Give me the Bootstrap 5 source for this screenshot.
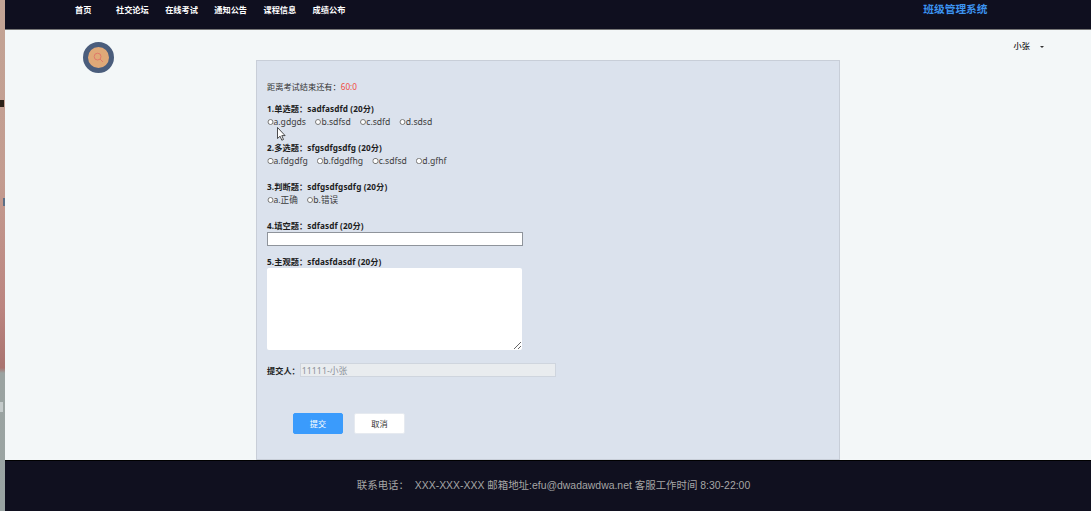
<!DOCTYPE html>
<html lang="zh">
<head>
<meta charset="utf-8">
<title>班级管理系统</title>
<link rel="stylesheet" href="https://cdn.jsdelivr.net/npm/bootstrap@5.3.0/dist/css/bootstrap.min.css">
<style>
html,body{height:511px;overflow:hidden}
body{font-family:"Noto Sans","Noto Sans CJK SC",sans-serif;font-size:8.2px;line-height:13px;color:#333;background:#f3f7f8}
.desk-strip{width:5px;flex:none;background:linear-gradient(#2b2118,#2b2118) 0 100px/4px 7px no-repeat,linear-gradient(#5b6f86,#5b6f86) 3px 198px/2px 8px no-repeat,linear-gradient(#c4cbcb,#c4cbcb) 0 402px/3px 10px no-repeat,linear-gradient(180deg,#c2a495 0,#c39c90 35%,#bb8580 60%,#a97470 72%,#9aa3a1 73%,#9aa4a3 100%)}
.top-bar{height:30px;background:#0f0f1f;border-bottom:1px solid #777;padding-left:70px;padding-right:103.5px}
.top-link{font-family:"Noto Sans CJK SC",sans-serif;font-size:8.2px;font-weight:700;line-height:18px;color:#fff;text-decoration:none;margin-right:16.4px}
.top-link.first-link{margin-right:24.6px}
.brand-name{font-family:"Noto Sans CJK SC",sans-serif;font-size:10.7px;font-weight:700;line-height:18px;color:#3c93f0}
.middle-area{height:430px;padding-left:78px;padding-right:47px}
.avatar-ring{width:31px;height:31px;margin-top:12px;border:5px solid #4a5d7c;border-radius:50%;background:#e0a978;flex:none}
.user-name{margin-top:9px;font-size:8.2px;font-family:"Noto Sans CJK SC",sans-serif;color:#222;font-weight:500}
.user-caret{display:inline-block;margin-left:10px;vertical-align:middle;border:2px solid transparent;border-top-color:#333;border-bottom:0}
.exam-card{width:584px;height:400px;margin:30px 0 0 142px;padding:19px 10px 0;background:#dbe2ed;border:1px solid #c8ced8;border-radius:0;flex:none}
.time-left{color:#f04a40}
.q-block{margin-top:9px}
.q-block+.q-block{margin-top:13px}
.q-block.q-tight{margin-top:9px}
.q-title{font-weight:700;color:#1d1d1d;margin:0;letter-spacing:.1px}
.q-opts{display:flex;color:#3c3c3c;font-size:8.6px;height:13px;padding-top:2px}
.q-opts label{display:flex;align-items:center;margin-right:9px}
.q-opts input{width:6.5px;height:6.5px;margin:0 0 1px 0}
.blank-input{display:block;width:256px;height:14px;background:#fff;border:1px solid #8f949b;border-radius:0;padding:0}
.essay-input{display:block;width:255px;height:82px;background:#fff;border:0;border-radius:2px}
.submitter-row{margin-top:13px;height:14px}
.submitter-row span{font-weight:700;color:#222}
.submitter-input{width:256px;height:14px;padding:0 1px;font-size:8.8px;line-height:12px;min-height:0;border:1px solid #cfd5de;background:#e3e8f0;color:#8d939c;border-radius:0}
.act-row{margin:36px 0 0 26px;gap:11px}
.act-btn{width:50px;height:21px;padding:0;font-size:8.2px;line-height:19px;border-radius:2px}
.act-ok{background:#3a9bfc;border-color:#3a9bfc;color:#fff}
.act-no{width:51px;background:#fff;border-color:#e6eaf0;color:#333}
.foot-bar{height:51px;background:#10101f;border-top:1px solid #000;color:#a6a6a6;font-size:10.45px;line-height:50px;font-family:"Liberation Sans","Noto Sans CJK SC",sans-serif;padding-left:11px}
.mouse-arrow{position:absolute;left:277px;top:127px;width:9px;height:14px}
</style>
</head>
<body>
<div class="d-flex" style="height:511px">
  <div class="desk-strip"></div>
  <div class="flex-grow-1 d-flex flex-column">
    <header class="top-bar d-flex justify-content-between align-items-start">
      <nav class="d-flex">
        <a class="top-link first-link" href="#">首页</a>
        <a class="top-link" href="#">社交论坛</a>
        <a class="top-link" href="#">在线考试</a>
        <a class="top-link" href="#">通知公告</a>
        <a class="top-link" href="#">课程信息</a>
        <a class="top-link" href="#">成绩公布</a>
      </nav>
      <div class="brand-name">班级管理系统</div>
    </header>
    <div class="middle-area d-flex align-items-start">
      <div class="avatar-ring d-flex align-items-center justify-content-center">
        <svg width="11" height="11" viewBox="0 0 11 11" fill="none" stroke="#e0796a" stroke-width="1"><circle cx="4.6" cy="4.6" r="3.4"/><path d="M7 7l3 3"/></svg>
      </div>
      <form class="card exam-card d-block">
        <div>距离考试结束还有：<span class="time-left">60:0</span></div>
        <div class="q-block">
          <p class="q-title">1.单选题：sadfasdfd (20分)</p>
          <div class="q-opts">
            <label><input type="radio" name="q1">a.gdgds</label>
            <label><input type="radio" name="q1">b.sdfsd</label>
            <label><input type="radio" name="q1">c.sdfd</label>
            <label><input type="radio" name="q1">d.sdsd</label>
          </div>
        </div>
        <div class="q-block">
          <p class="q-title">2.多选题：sfgsdfgsdfg (20分)</p>
          <div class="q-opts">
            <label><input type="checkbox">a.fdgdfg</label>
            <label><input type="checkbox">b.fdgdfhg</label>
            <label><input type="checkbox">c.sdfsd</label>
            <label><input type="checkbox">d.gfhf</label>
          </div>
        </div>
        <div class="q-block">
          <p class="q-title">3.判断题：sdfgsdfgsdfg (20分)</p>
          <div class="q-opts">
            <label><input type="radio" name="q3">a.正确</label>
            <label><input type="radio" name="q3">b.错误</label>
          </div>
        </div>
        <div class="q-block">
          <p class="q-title">4.填空题：sdfasdf (20分)</p>
          <input class="blank-input" type="text">
        </div>
        <div class="q-block q-tight">
          <p class="q-title">5.主观题：sfdasfdasdf (20分)</p>
          <textarea class="essay-input"></textarea>
        </div>
        <div class="submitter-row d-flex align-items-center">
          <span>提交人：</span>
          <input class="form-control submitter-input" type="text" value="11111-小张" disabled>
        </div>
        <div class="act-row d-flex">
          <button type="button" class="btn act-btn act-ok">提交</button>
          <button type="button" class="btn act-btn act-no">取消</button>
        </div>
      </form>
      <div class="user-name ms-auto">小张<span class="user-caret"></span></div>
    </div>
    <footer class="foot-bar text-center">联系电话： &nbsp;XXX-XXX-XXX 邮箱地址:efu@dwadawdwa.net 客服工作时间 8:30-22:00</footer>
  </div>
</div>
<svg class="mouse-arrow" viewBox="0 0 9 14"><path d="M.5.5v11l2.6-2.3 1.7 4 1.7-.7-1.7-3.9h3.3z" fill="#fff" stroke="#222" stroke-width=".8"/></svg>
<script src="https://cdn.jsdelivr.net/npm/bootstrap@5.3.0/dist/js/bootstrap.bundle.min.js"></script>
</body>
</html>
